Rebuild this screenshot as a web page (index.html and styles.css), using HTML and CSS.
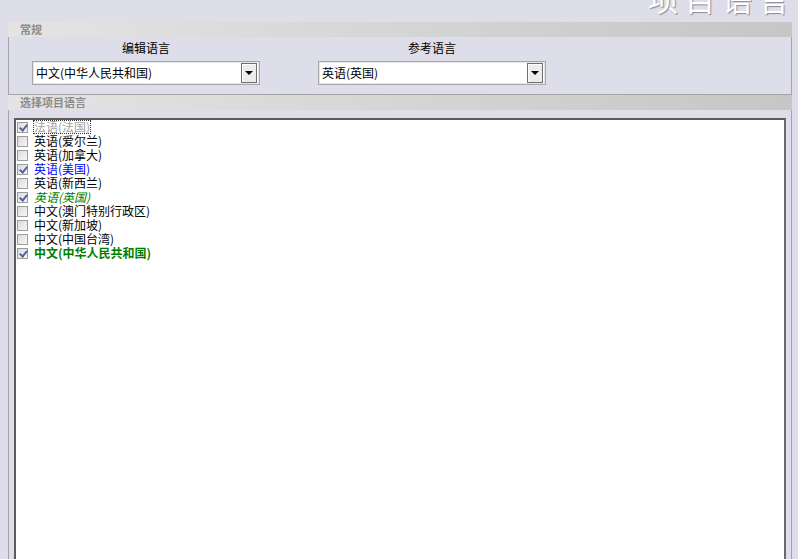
FILE: index.html
```html
<!DOCTYPE html>
<html lang="zh-CN">
<head>
  <meta charset="UTF-8">
  <title>项目语言</title>
  <link rel="stylesheet" href="styles.css">
</head>
<body>
  <div class="top">
    <span class="page-title">项目语言</span>
  </div>

  <div class="group">
    <div class="group-head">常规</div>
    <div class="group-body lang-row">
      <div class="field">
        <div class="field-label">编辑语言</div>
        <div class="combo">
          <span class="combo-text">中文(中华人民共和国)</span>
          <span class="combo-btn"></span>
        </div>
      </div>
      <div class="field">
        <div class="field-label">参考语言</div>
        <div class="combo">
          <span class="combo-text">英语(英国)</span>
          <span class="combo-btn"></span>
        </div>
      </div>
    </div>
  </div>

  <div class="group group-list">
    <div class="group-head">选择项目语言</div>
    <div class="group-body">
      <ul class="listbox">
        <li class="item disabled focus"><span class="check on"></span><span class="label">法语(法国)</span></li>
        <li class="item"><span class="check"></span><span class="label">英语(爱尔兰)</span></li>
        <li class="item"><span class="check"></span><span class="label">英语(加拿大)</span></li>
        <li class="item ref"><span class="check on"></span><span class="label">英语(美国)</span></li>
        <li class="item"><span class="check"></span><span class="label">英语(新西兰)</span></li>
        <li class="item source"><span class="check on"></span><span class="label">英语(英国)</span></li>
        <li class="item"><span class="check"></span><span class="label">中文(澳门特别行政区)</span></li>
        <li class="item"><span class="check"></span><span class="label">中文(新加坡)</span></li>
        <li class="item"><span class="check"></span><span class="label">中文(中国台湾)</span></li>
        <li class="item edit"><span class="check on"></span><span class="label">中文(中华人民共和国)</span></li>
      </ul>
    </div>
  </div>
</body>
</html>
```

FILE: styles.css
```css
body {
  margin: 0;
  height: 559px;
  overflow: hidden;
  background: #dedeea;
  font-family: "Noto Sans CJK SC", "DejaVu Sans", sans-serif;
  font-size: 12px;
  color: #000;
}

/* Page title, cut off at the top */
.top {
  height: 22px;
  overflow: hidden;
  display: flex;
  justify-content: flex-end;
  align-items: flex-end;
  padding-right: 2px;
}

.page-title {
  font-size: 30px;
  line-height: 30px;
  letter-spacing: 7px;
  color: #fff;
  text-shadow: 1px 1px 1px #8a8a96;
  margin-bottom: 9px;
}

/* Group boxes */
.group {
  margin: 0 6px 0 8px;
  border-left: 1px solid #a4a4a4;
  border-right: 1px solid #a4a4a4;
}

.group-head {
  height: 15px;
  line-height: 15px;
  padding-left: 12px;
  margin-left: -1px;
  margin-right: -1px;
  font-size: 11px;
  font-weight: bold;
  color: #8c8c8c;
  background: linear-gradient(to right, #e4e4e4, #c6c6c6);
}

.lang-row {
  display: flex;
  gap: 58px;
  padding: 3px 0 9px 23px;
  border-bottom: 1px solid #a4a4a4;
}

.field {
  width: 228px;
}

.field-label {
  text-align: center;
  line-height: 16px;
  margin-bottom: 5px;
}

.combo {
  display: flex;
  align-items: center;
  height: 20px;
  padding: 1px;
  background: #fff;
  border: 1px solid #a8a8a8;
  box-shadow: inset 0 0 0 1px #e6e6e6;
}

.combo-text {
  flex: 1;
  padding-left: 2px;
  line-height: 20px;
}

.combo-btn {
  width: 14px;
  height: 18px;
  margin-right: 1px;
  background: #ececec;
  border: 1px solid #6e6e6e;
  box-shadow: inset 1px 1px 0 #fff;
  display: flex;
  align-items: center;
  justify-content: center;
}

.combo-btn::after {
  content: "";
  border-left: 4px solid transparent;
  border-right: 4px solid transparent;
  border-top: 4px solid #000;
}

/* Language list */
.group-list .group-body {
  padding: 8px 5px 0 5px;
}

.listbox {
  list-style: none;
  margin: 0;
  padding: 0 0 0 1px;
  height: 460px;
  background: #fff;
  border-top: 2px solid #5c5c5c;
  border-left: 2px solid #5c5c5c;
  border-right: 2px solid #6a6a6a;
}

.item {
  display: flex;
  align-items: center;
  height: 14px;
}

.check {
  width: 11px;
  height: 11px;
  box-sizing: border-box;
  border: 1px solid #9c9c9c;
  background: linear-gradient(135deg, #dcdcdc, #f6f6f6);
  margin-right: 5px;
  position: relative;
}

.check.on::after {
  content: "";
  position: absolute;
  left: 3px;
  top: 0;
  width: 3px;
  height: 6px;
  border-right: 2px solid #4f63a8;
  border-bottom: 2px solid #4f63a8;
  transform: rotate(40deg);
}

.label {
  line-height: 14px;
  padding: 0 1px;
}

.item.disabled .label {
  color: #a0a0a0;
}

.item.focus .label {
  outline: 1px dotted #333;
  outline-offset: -1px;
}

.item.ref .label {
  color: #0000ff;
}

.item.source .label {
  color: #008000;
  font-style: italic;
}

.item.edit .label {
  color: #008000;
  font-weight: bold;
}
```
